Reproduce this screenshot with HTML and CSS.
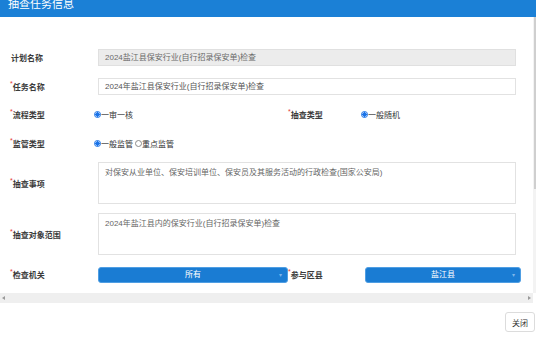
FILE: index.html
```html
<!DOCTYPE html>
<html lang="zh">
<head>
<meta charset="utf-8">
<title>抽查任务信息</title>
<link rel="stylesheet" href="styles.css">
</head>
<body>
<div class="dialog">
  <div class="header"><span class="title">抽查任务信息</span></div>
  <div class="viewport">
    <div class="scroll-row">
      <div class="form">
        <div class="lbl">计划名称</div>
        <div class="input readonly span">2024盐江县保安行业(自行招录保安单)检查</div>

        <div class="lbl"><i class="req">*</i>任务名称</div>
        <div class="input span">2024年盐江县保安行业(自行招录保安单)检查</div>

        <div class="lbl"><i class="req">*</i>流程类型</div>
        <div class="radios"><span class="radio checked"></span>一审一核</div>
        <div class="lbl"><i class="req">*</i>抽查类型</div>
        <div class="radios"><span class="radio checked"></span>一般随机</div>

        <div class="lbl"><i class="req">*</i>监管类型</div>
        <div class="radios span"><span class="radio checked"></span>一般监管<span class="radio off"></span>重点监管</div>

        <div class="lbl"><i class="req">*</i>抽查事项</div>
        <div class="textarea span">对保安从业单位、保安培训单位、保安员及其服务活动的行政检查(国家公安局)</div>

        <div class="lbl"><i class="req">*</i>抽查对象范围</div>
        <div class="textarea span">2024年盐江县内的保安行业(自行招录保安单)检查</div>

        <div class="lbl"><i class="req">*</i>检查机关</div>
        <div class="select">所有<span class="caret">▾</span></div>
        <div class="lbl"><i class="req">*</i>参与区县</div>
        <div class="select">盐江县<span class="caret">▾</span></div>
      </div>
      <div class="vscroll"><div class="thumb"></div></div>
    </div>
    <div class="hscroll"><span class="arrow left"></span><span class="arrow right"></span></div>
  </div>
  <div class="footer"><button class="btn" type="button">关闭</button></div>
</div>
</body>
</html>
```

FILE: styles.css
```css
* { box-sizing: border-box; }
html, body { margin: 0; padding: 0; background: #fff; }
body {
  font-family: "Liberation Sans", "Noto Sans CJK SC", sans-serif;
  font-size: 8px;
  color: #333;
}
.dialog {
  width: 536px;
  height: 338px;
  display: flex;
  flex-direction: column;
  overflow: hidden;
}
.header {
  height: 17px;
  background: #1b80d6;
  overflow: hidden;
  padding-left: 8px;
  flex: none;
}
.title {
  display: block;
  color: #fff;
  font-size: 11px;
  line-height: 8px;
}
.viewport {
  display: flex;
  flex-direction: column;
  flex: none;
}
.scroll-row {
  display: flex;
  height: 276px;
}
.form {
  flex: 1;
  display: grid;
  grid-template-columns: 88px 190px 77px 156px;
  grid-template-rows: 27px 31px 24px 34px 46px 56px 25px;
  align-items: center;
  padding: 27px 0 6px 10px;
}
.lbl {
  font-weight: bold;
  color: #3a3a3a;
  padding-left: 1px;
  white-space: nowrap;
}
.req {
  font-style: normal;
  color: #e53935;
  font-size: 7px;
  font-weight: normal;
  vertical-align: top;
  position: relative;
  top: -1px;
  margin-left: -1px;
}
.span {
  grid-column: 2 / 5;
  margin-right: 5px;
}
.input {
  height: 17px;
  line-height: 15px;
  border: 1px solid #e2e2e2;
  padding: 0 6px;
  color: #555;
  white-space: nowrap;
}
.input.readonly {
  background: #ececec;
  color: #6a6a6a;
  border-color: #e0e0e0;
}
.textarea {
  height: 42px;
  border: 1px solid #e2e2e2;
  padding: 4px 6px;
  line-height: 11px;
  color: #666;
}
.radios {
  display: flex;
  align-items: center;
  margin-left: -4px;
  color: #333;
  white-space: nowrap;
}
.radio {
  width: 7px;
  height: 7px;
  border-radius: 50%;
  border: 1px solid #1a73e8;
  background: radial-gradient(circle, #1a73e8 0 2px, #fff 2.3px);
  flex: none;
}
.radio.off {
  border-color: #8a8a8a;
  background: #fff;
  margin-left: 2px;
}
.select {
  position: relative;
  height: 16px;
  background: #1a7cd3;
  border: 1px solid #4f9ee3;
  border-radius: 3px;
  color: #fff;
  text-align: center;
  line-height: 14px;
}
.caret {
  position: absolute;
  right: 5px;
  top: 0;
  font-size: 6px;
  color: #7db6ea;
}
.vscroll {
  width: 3px;
  background: #f3f3f3;
  flex: none;
}
.thumb {
  width: 2px;
  height: 172px;
  margin-left: 1px;
  background: #cfcfcf;
}
.hscroll {
  height: 10px;
  width: 533px;
  background: #efefef;
  display: flex;
  align-items: center;
  justify-content: space-between;
  padding: 0 2px;
}
.arrow {
  width: 0;
  height: 0;
  border-top: 2px solid transparent;
  border-bottom: 2px solid transparent;
}
.arrow.left { border-right: 3px solid #9a9a9a; }
.arrow.right { border-left: 3px solid #9a9a9a; }
.footer {
  flex: 1;
  display: flex;
  justify-content: flex-end;
  align-items: flex-start;
  padding: 9px 1px 0 0;
}
.btn {
  width: 30px;
  height: 20px;
  padding: 0;
  background: #fff;
  border: 1px solid #dcdcdc;
  border-radius: 3px;
  font-family: inherit;
  font-size: 8px;
  color: #333;
}
```
